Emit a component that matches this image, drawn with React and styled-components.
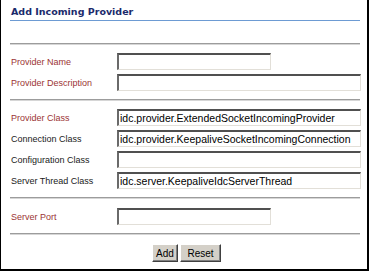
import React from 'react'
import styled, { createGlobalStyle } from 'styled-components'

const GlobalStyle = createGlobalStyle`
  html, body {
    margin: 0;
    padding: 0;
    background: #ffffff;
  }
`

const Frame = styled.div`
  box-sizing: border-box;
  width: 369px;
  height: 271px;
  display: flex;
  flex-direction: column;
  padding: 0 7px 0 9px;
  background: #ffffff;
  border-left: 1px solid #000;
  border-right: 2px solid #000;
  border-bottom: 2px solid #000;
  font-family: 'Liberation Sans', Arial, sans-serif;
`

const Title = styled.h1`
  margin: 0;
  padding: 6px 0 3px 1px;
  line-height: 11px;
  font-family: 'DejaVu Sans', Verdana, sans-serif;
  font-size: 9.5px;
  font-weight: bold;
  color: #1b2a6b;
  border-bottom: 1px solid #6d9bd3;
`

const Spacer = styled.div`
  height: ${(p) => p.h}px;
  flex: none;
`

const Rule = styled.div`
  height: 0;
  border-top: 1px solid #9c9c9c;
  border-bottom: 1px solid #d6d6d6;
`

const Section = styled.div`
  display: grid;
  grid-template-columns: 106px 1fr;
  row-gap: 4px;
  align-items: center;
  padding: ${(p) => p.top ?? 8}px 0 8px 1px;
`

const Label = styled.label`
  font-size: 9px;
  color: ${(p) => (p.required ? '#9b3434' : '#1a1a1a')};
  white-space: nowrap;
`

const Field = styled.input`
  box-sizing: border-box;
  width: ${(p) => (p.short ? 154 : 244)}px;
  height: 17px;
  margin: 0;
  padding: 0 1px;
  font-family: 'Liberation Sans', Arial, sans-serif;
  font-size: 10.5px;
  color: #000;
  background: #fff;
  border-style: solid;
  border-width: 2px 1px 1px 2px;
  border-color: #505050 #e2dfd8 #e2dfd8 #6a6a6a;
  outline: none;
`

const Buttons = styled.div`
  display: flex;
  justify-content: center;
  gap: 2px;
  padding: 9px 0 0 3px;
`

const Button = styled.button`
  box-sizing: border-box;
  width: ${(p) => p.w}px;
  height: 18px;
  margin: 0;
  padding: 0;
  font-family: 'Liberation Sans', Arial, sans-serif;
  font-size: 10px;
  color: #000;
  background: #d4d0c8;
  border: 1px solid;
  border-color: #ffffff #404040 #404040 #ffffff;
  box-shadow: inset -1px -1px 0 #808080;
`

const Row = ({ label, required, value, short }) => (
  <>
    <Label required={required}>{label}</Label>
    <Field short={short} defaultValue={value} />
  </>
)

export default function App() {
  return (
    <Frame>
      <GlobalStyle />
      <Title>Add Incoming Provider</Title>
      <Spacer h={22} />
      <Rule />
      <Section>
        <Row label="Provider Name" required short />
        <Row label="Provider Description" required />
      </Section>
      <Rule />
      <Section>
        <Row
          label="Provider Class"
          required
          value="idc.provider.ExtendedSocketIncomingProvider"
        />
        <Row
          label="Connection Class"
          value="idc.provider.KeepaliveSocketIncomingConnection"
        />
        <Row label="Configuration Class" />
        <Row
          label="Server Thread Class"
          value="idc.server.KeepaliveIdcServerThread"
        />
      </Section>
      <Rule />
      <Section top={9}>
        <Row label="Server Port" required short />
      </Section>
      <Rule />
      <Buttons>
        <Button w={26}>Add</Button>
        <Button w={41}>Reset</Button>
      </Buttons>
    </Frame>
  )
}
